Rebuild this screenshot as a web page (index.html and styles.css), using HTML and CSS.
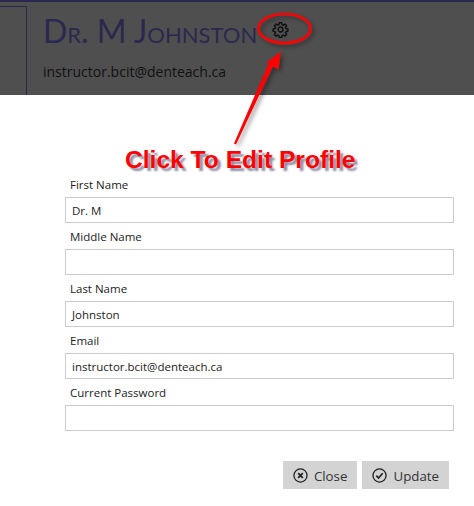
FILE: index.html
```html
<!DOCTYPE html>
<html lang="en">
<head>
<meta charset="utf-8">
<title>Edit Profile</title>
<link rel="stylesheet" href="styles.css">
</head>
<body>
<div class="page">
  <header class="header">
    <div class="avatar-box"></div>
    <div class="identity">
      <div class="name-row">
        <h1 class="name">Dr. M Johnston</h1>
        <svg class="gear" viewBox="0 0 24 24" fill="none" stroke="#111" stroke-width="2.1" stroke-linejoin="round">
          <path d="M10.3 2.5h3.4l.5 2.7 1.7.7 2.3-1.6 2.4 2.4-1.6 2.3.7 1.7 2.7.5v3.4l-2.7.5-.7 1.7 1.6 2.3-2.4 2.4-2.3-1.6-1.7.7-.5 2.7h-3.4l-.5-2.7-1.7-.7-2.3 1.6-2.4-2.4 1.6-2.3-.7-1.7-2.7-.5v-3.4l2.7-.5.7-1.7-1.6-2.3 2.4-2.4 2.3 1.6 1.7-.7z"/>
          <circle cx="12" cy="12" r="3.4"/>
        </svg>
      </div>
      <div class="email">instructor.bcit@denteach.ca</div>
    </div>
  </header>
  <form class="form">
    <label class="label">First Name</label>
    <div class="input">Dr. M</div>
    <label class="label">Middle Name</label>
    <div class="input"></div>
    <label class="label">Last Name</label>
    <div class="input">Johnston</div>
    <label class="label">Email</label>
    <div class="input">instructor.bcit@denteach.ca</div>
    <label class="label">Current Password</label>
    <div class="input"></div>
    <div class="actions">
      <div class="btn">
        <svg class="btn-icon" viewBox="0 0 16 16" fill="none" stroke="#222" stroke-width="1.4"><circle cx="8" cy="8" r="7"/><path stroke-width="1.9" d="M5.5 5.5l5 5M10.5 5.5l-5 5"/></svg>
        <span class="btn-text">Close</span>
      </div>
      <div class="btn">
        <svg class="btn-icon" viewBox="0 0 16 16" fill="none" stroke="#222" stroke-width="1.4"><circle cx="8" cy="8" r="7"/><path stroke-width="1.8" d="M4.6 8.2l2.4 2.4 4.4-5"/></svg>
        <span class="btn-text">Update</span>
      </div>
    </div>
  </form>
  <svg class="annotation" viewBox="0 0 474 506" fill="none">
    <defs>
      <filter id="soft" x="-20%" y="-20%" width="150%" height="150%">
        <feDropShadow dx="2.5" dy="2.5" stdDeviation="2" flood-color="#000" flood-opacity=".4"/>
      </filter>
    </defs>
    <g filter="url(#soft)">
      <ellipse cx="284.5" cy="28.5" rx="26" ry="14.5" stroke="#f00" stroke-width="2.6"/>
      <path d="M280.8 51.5L278.5 69.5L272.8 66.6L236 144.5L234 143.5L268.6 63.4L266.8 62.2Z" fill="#f00"/>
    </g>
  </svg>
  <div class="callout">Click To Edit Profile</div>
</div>
</body>
</html>
```
FILE: styles.css
```css
html, body { margin: 0; padding: 0; background: #fff; }
.page {
  position: relative;
  width: 474px;
  height: 506px;
  overflow: hidden;
  font-family: "Open Sans", "Noto Sans", sans-serif;
  color: #222;
}
.header {
  box-sizing: border-box;
  height: 95px;
  background: #4f4f4f;
  border-top: 2px solid #2b2850;
  display: flex;
  align-items: stretch;
}
.avatar-box {
  box-sizing: border-box;
  width: 27px;
  margin-top: 4px;
  border-top: 1px solid #2b2850;
  border-right: 1px solid #2b2850;
}
.identity { padding-left: 16px; }
.name-row { display: flex; align-items: center; height: 57px; }
.name {
  margin: 0;
  font-family: "Lato", sans-serif;
  font-weight: 400;
  font-variant: small-caps;
  font-size: 32px;
  line-height: 57px;
  color: #2b2850;
}
.gear { width: 17px; height: 17px; margin-left: 15px; margin-top: -3px; }
.email { font-size: 14px; line-height: 20px; color: #111; margin-top: 3px; }
.form {
  display: flex;
  flex-direction: column;
  padding: 81px 20px 0 65px;
}
.label { font-size: 11.5px; line-height: 17px; padding-left: 5px; height: 17px; margin-bottom: 4px; }
.input {
  box-sizing: border-box;
  height: 26px;
  margin-bottom: 5px;
  border: 1px solid #ccc;
  padding-left: 6px;
  font-size: 11.5px;
  line-height: 26px;
  color: #222;
}
.actions { display: flex; justify-content: flex-end; gap: 5px; margin-top: 25px; padding-right: 5px; }
.btn {
  box-sizing: border-box;
  height: 28px;
  display: flex;
  align-items: center;
  gap: 6px;
  padding: 0 10px;
  background: #d3d3d3;
  font-size: 13.3px;
  color: #333;
}
.btn-text { padding-top: 2px; }
.btn-icon { width: 15px; height: 15px; }
.annotation { position: absolute; left: 0; top: 0; width: 474px; height: 506px; pointer-events: none; }
.callout {
  position: absolute;
  left: 125px;
  top: 147px;
  font-family: "Liberation Sans", Arial, sans-serif;
  font-weight: 700;
  font-size: 24.6px;
  line-height: 26px;
  color: #f00;
  white-space: nowrap;
  text-shadow: 3px 3px 2px rgba(50, 50, 90, .55);
}
```
